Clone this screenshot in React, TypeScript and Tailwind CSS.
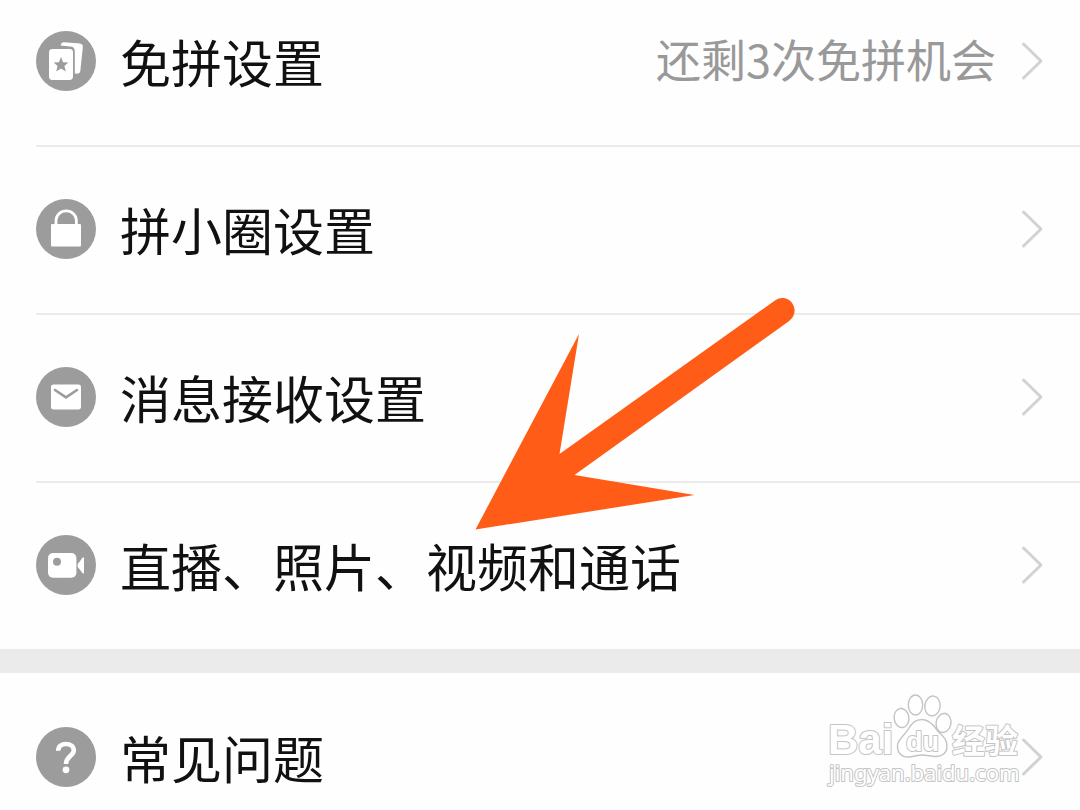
import type { ReactNode } from 'react';

type SettingItem = {
  id: string;
  label: string;
  note?: string;
  icon: ReactNode;
};

const CardsIcon = () => (
  <>
    <path d="M24.6 14.6Q25 11 28.4 11.2L43.8 12.6Q47.2 13 46.8 16.4L44.4 39.6Q44 42.8 41 42.8L38.8 42.6V20.4Q38.8 15.6 34 15.6Z" fill="#fff" />
    <rect x="13" y="18" width="24" height="31" rx="3.4" fill="#fff" />
    <path d="M25 26L27 31.2L32.4 31.6L28.4 35L29.8 40.4L25 37.6L20.2 40.4L21.6 35L17.6 31.6L23 31.2Z" fill="#9c9c9c" />
  </>
);

const LockIcon = () => (
  <>
    <rect x="15" y="25" width="30" height="22.4" rx="1" fill="#fff" />
    <path d="M20 26V21.5A10.2 9.6 0 0 1 40.4 21.5V26" fill="none" stroke="#fff" strokeWidth="2.8" />
  </>
);

const MailIcon = () => (
  <>
    <rect x="15" y="17.6" width="30" height="24.8" rx="2.6" fill="#fff" />
    <path d="M19 23L30 30.4L41 23" fill="none" stroke="#9c9c9c" strokeWidth="2.6" strokeLinecap="round" strokeLinejoin="round" />
  </>
);

const CameraIcon = () => (
  <>
    <rect x="12" y="18" width="28.4" height="24.8" rx="5" fill="#fff" />
    <circle cx="21" cy="26.8" r="4" fill="#9c9c9c" />
    <path d="M41.6 29.4Q42.2 27.8 43.6 26.8L46.4 22.8Q48 21.4 48 23V37.6Q48 39.4 46.4 38L43.6 34.2Q42.2 32.8 41.6 31.4Z" fill="#fff" />
  </>
);

const HelpIcon = () => (
  <>
    <path d="M22.2 23.8C22.2 19.4 25.4 17 30 17C34.6 17 37.8 19.6 37.8 23.6C37.8 28.8 30 29.2 30 37" fill="none" stroke="#fff" strokeWidth="4.6" />
    <circle cx="30" cy="42.8" r="3.4" fill="#fff" />
  </>
);

const accountItems: SettingItem[] = [
  { id: 'skip-group', label: '免拼设置', note: '还剩3次免拼机会', icon: <CardsIcon /> },
  { id: 'circle', label: '拼小圈设置', icon: <LockIcon /> },
  { id: 'message', label: '消息接收设置', icon: <MailIcon /> },
  { id: 'media', label: '直播、照片、视频和通话', icon: <CameraIcon /> },
];

const SettingLink = ({ item }: { item: SettingItem }) => (
  <a href={`#${item.id}`} className="flex h-[60px] items-center gap-6 pr-9">
    <svg viewBox="0 0 60 60" className="size-[60px] shrink-0" aria-hidden="true">
      <circle cx="30" cy="30" r="30" fill="#9c9c9c" />
      {item.icon}
    </svg>
    <span className="flex-1 whitespace-nowrap text-[51px] leading-[60px] text-[#111]">{item.label}</span>
    {item.note && (
      <span className="whitespace-nowrap pb-1 text-[45px] leading-[60px] text-[#999]">{item.note}</span>
    )}
    <svg viewBox="0 0 24 40" className="h-10 w-6 shrink-0" aria-hidden="true">
      <path d="M3.5 3L21 20L3.5 37" fill="none" stroke="#d2d2d2" strokeWidth="3" strokeLinecap="round" strokeLinejoin="round" />
    </svg>
  </a>
);

const PointerArrow = () => (
  <svg
    viewBox="0 0 324 236"
    className="pointer-events-none absolute left-[474px] top-[296px] h-[236px] w-[324px]"
    aria-hidden="true"
  >
    <path
      d="M1.5 233.5L105 38L85.5 158L301 4.5C308 -0.5 316 2.5 319 8.5C322.5 15.5 320 21.5 314.5 25.5L100.5 179L220.5 199Z"
      fill="#ff5c17"
    />
  </svg>
);

const Watermark = () => (
  <svg
    viewBox="0 0 208 100"
    className="pointer-events-none absolute right-12 top-[690px] h-[100px] w-[208px]"
    fill="#fff"
    stroke="#c4c4c4"
    strokeWidth="2"
    strokeLinejoin="round"
    aria-label="Baidu经验"
  >
    <text x="4" y="64" className="font-['Liberation_Sans'] text-[42px] font-bold [paint-order:stroke]">Bai</text>
    <g strokeWidth="1.4">
      <ellipse cx="77.5" cy="28" rx="7.4" ry="9.6" transform="rotate(-8 77.5 28)" />
      <ellipse cx="91.5" cy="15" rx="7.2" ry="10" />
      <ellipse cx="108.5" cy="16" rx="7.6" ry="10" transform="rotate(8 108.5 16)" />
      <ellipse cx="119.5" cy="33" rx="7.4" ry="9.6" transform="rotate(10 119.5 33)" />
      <path d="M98 29.5C105 29.5 109 34 113 40C117 45 123 48 123 56C123 63 118 67 111 66.5C106 66 102 65 98 65C93 65 89 67 84 67C77 67 73 62 73.5 55.5C74 49 80 46 84 39.5C88 33 91.5 29.5 98 29.5Z" />
    </g>
    <text x="82" y="61" className="font-['Liberation_Sans'] text-[27px] font-bold [paint-order:stroke]">du</text>
    <text x="128" y="63" className="font-['Noto_Sans_CJK_SC'] text-[33px] font-bold [paint-order:stroke]">经验</text>
    <text x="5" y="91" className="font-['Noto_Sans'] text-[22px] [paint-order:stroke]">jingyan.baidu.com</text>
  </svg>
);

const App = () => {
  return (
    <main className="relative overflow-hidden bg-[#fefefe] font-['Noto_Sans_CJK_SC',sans-serif]">
      <ul className="pl-9">
        {accountItems.map((item) => (
          <li
            key={item.id}
            className="border-b-2 border-[#ebebeb] pb-[54px] pt-[52px] first:pt-[31px] last:border-b-0"
          >
            <SettingLink item={item} />
          </li>
        ))}
      </ul>

      <div className="h-6 bg-[#ebebeb]" />

      <ul className="pl-9">
        <li className="pb-6 pt-[54px]">
          <SettingLink item={{ id: 'faq', label: '常见问题', icon: <HelpIcon /> }} />
        </li>
      </ul>

      <PointerArrow />
      <Watermark />
    </main>
  );
};

export default App;
